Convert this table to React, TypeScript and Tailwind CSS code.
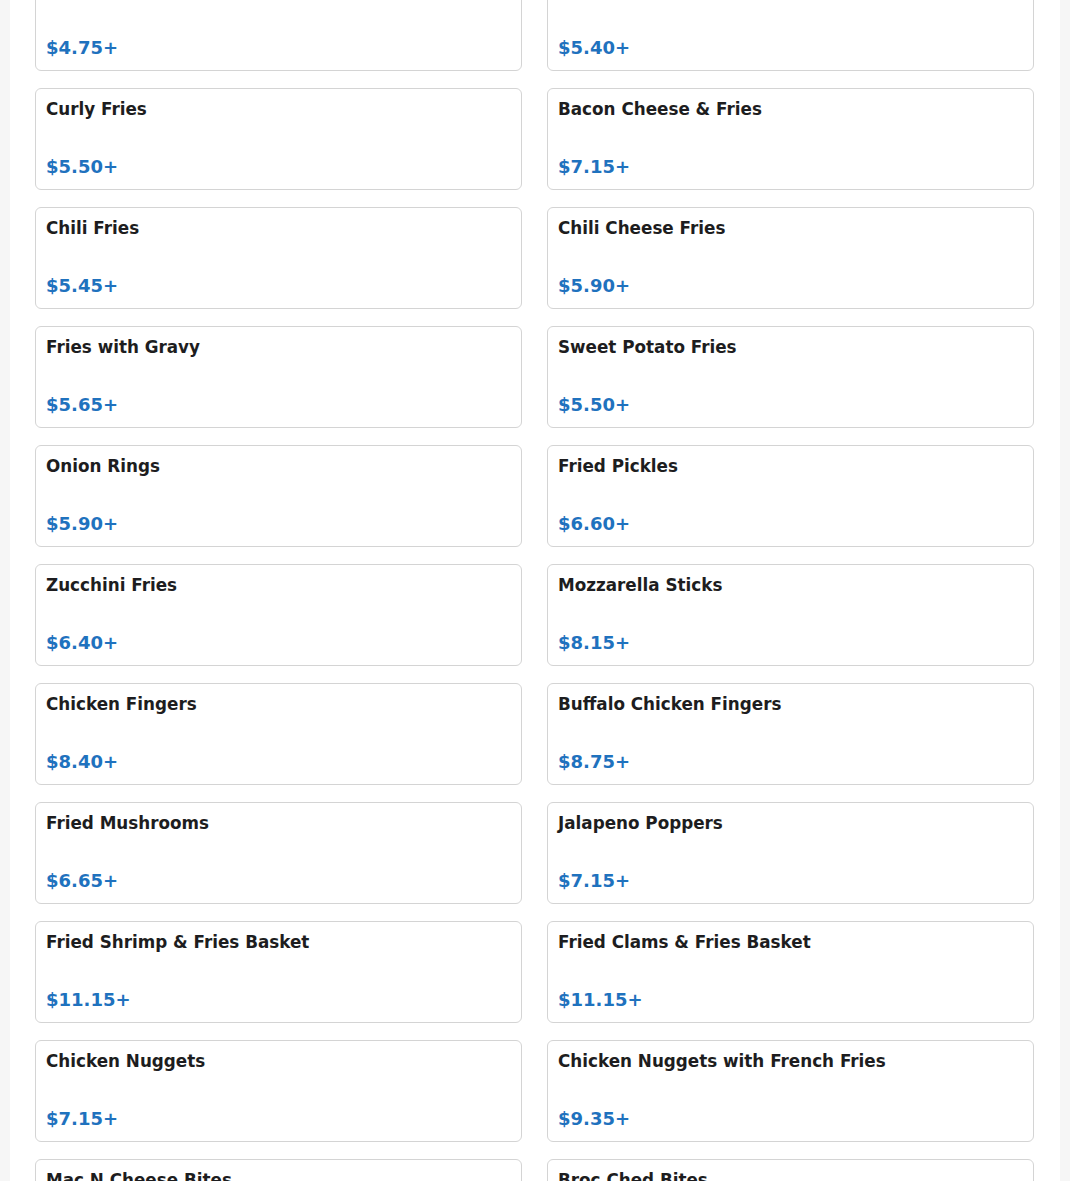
import React from 'react';

type Item = { name: string; price: string };

const items: Item[] = [
  { name: 'French Fries', price: '$4.75+' },
  { name: 'Cheese Fries', price: '$5.40+' },
  { name: 'Curly Fries', price: '$5.50+' },
  { name: 'Bacon Cheese & Fries', price: '$7.15+' },
  { name: 'Chili Fries', price: '$5.45+' },
  { name: 'Chili Cheese Fries', price: '$5.90+' },
  { name: 'Fries with Gravy', price: '$5.65+' },
  { name: 'Sweet Potato Fries', price: '$5.50+' },
  { name: 'Onion Rings', price: '$5.90+' },
  { name: 'Fried Pickles', price: '$6.60+' },
  { name: 'Zucchini Fries', price: '$6.40+' },
  { name: 'Mozzarella Sticks', price: '$8.15+' },
  { name: 'Chicken Fingers', price: '$8.40+' },
  { name: 'Buffalo Chicken Fingers', price: '$8.75+' },
  { name: 'Fried Mushrooms', price: '$6.65+' },
  { name: 'Jalapeno Poppers', price: '$7.15+' },
  { name: 'Fried Shrimp & Fries Basket', price: '$11.15+' },
  { name: 'Fried Clams & Fries Basket', price: '$11.15+' },
  { name: 'Chicken Nuggets', price: '$7.15+' },
  { name: 'Chicken Nuggets with French Fries', price: '$9.35+' },
  { name: 'Mac N Cheese Bites', price: '$7.15+' },
  { name: 'Broc Ched Bites', price: '$7.15+' },
];

function MenuCard({ name, price }: Item) {
  return (
    <div className="flex h-[102px] flex-col rounded-md border border-[#d4d4d4] bg-white px-[10px] pt-[9px]">
      <h3 className="text-[16.8px] font-bold leading-[22px] text-[#1d1d20]">{name}</h3>
      <p className="mt-[36px] text-[18px] font-bold leading-[22px] text-[#1f72be]">{price}</p>
    </div>
  );
}

export default function App() {
  return (
    <div className="h-[1181px] overflow-hidden bg-[#f6f6f6] font-['DejaVu_Sans',sans-serif]">
      <main className="mx-[10px] min-h-full bg-white pl-[25px] pr-[26px]">
        {/* Sides list, scrolled partway down */}
        <div className="-mt-[31px] grid grid-cols-2 gap-x-[25px] gap-y-[17px]">
          {items.map((item) => (
            <MenuCard key={item.name} {...item} />
          ))}
        </div>
      </main>
    </div>
  );
}
